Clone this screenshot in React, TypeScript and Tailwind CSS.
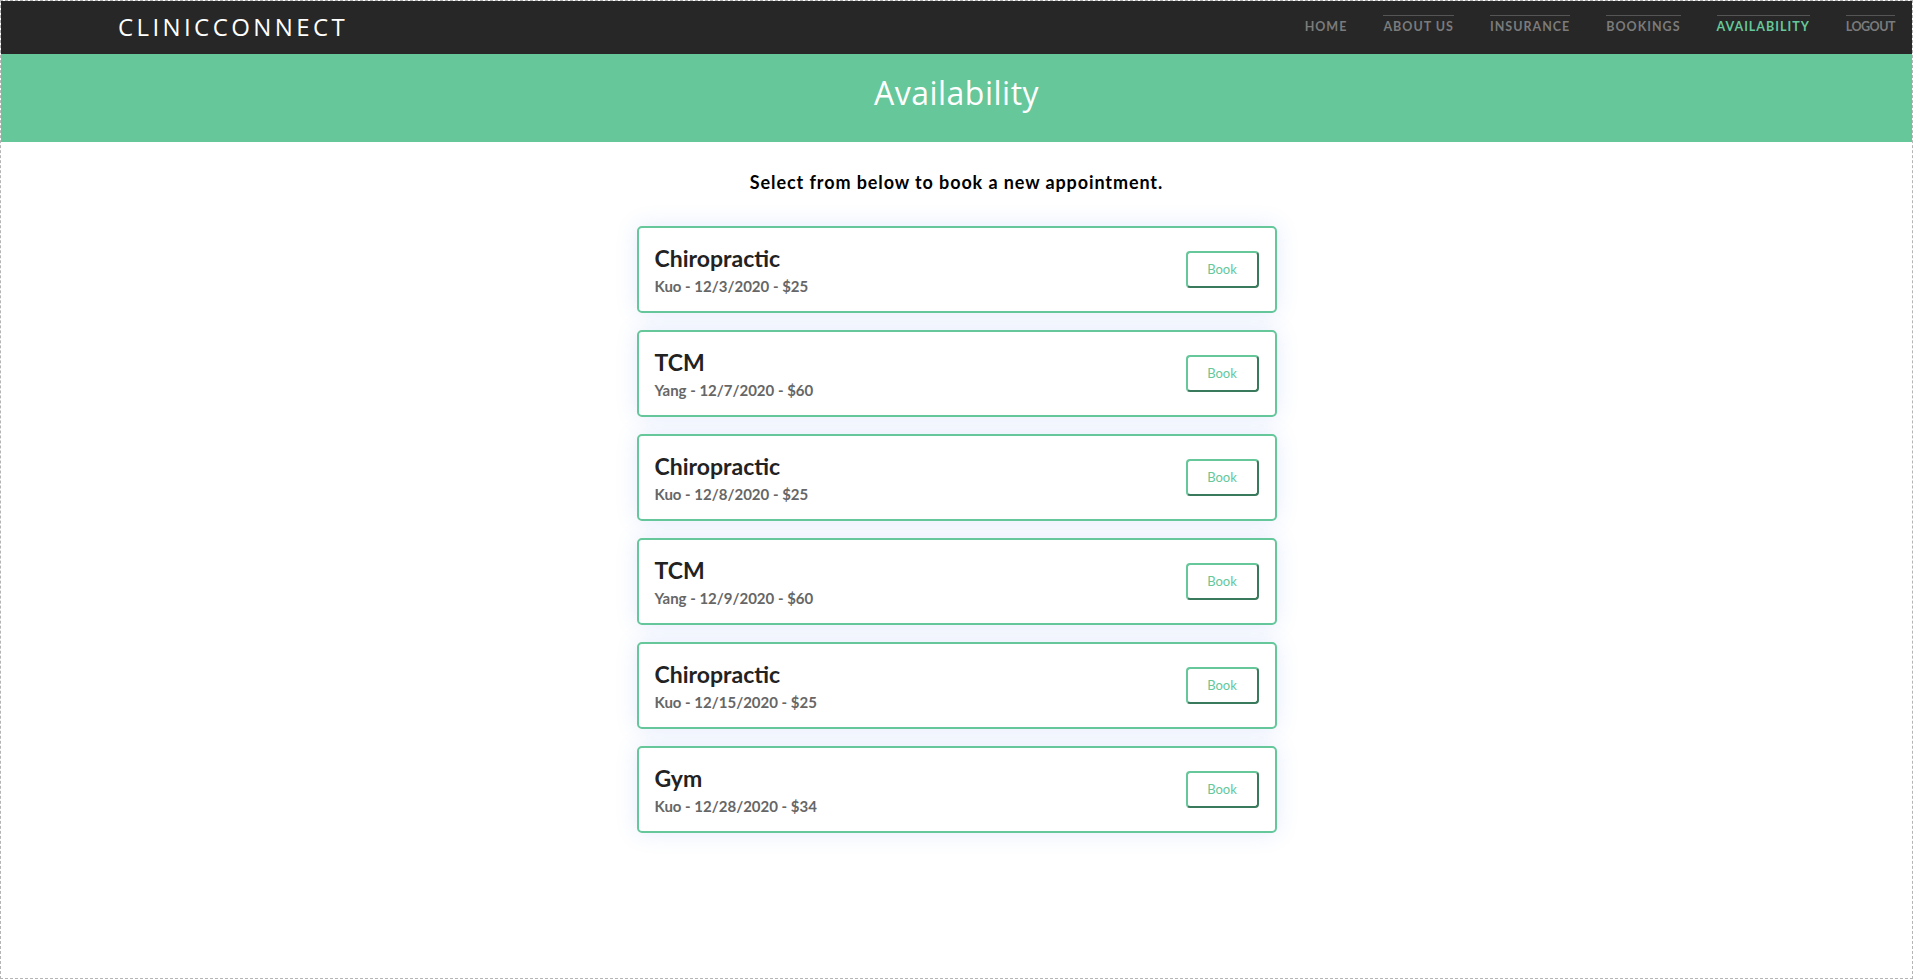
import React from "react";

const navItems = [
  { label: "HOME", line: false, active: false, tight: false },
  { label: "ABOUT US", line: true, active: false, tight: false },
  { label: "INSURANCE", line: true, active: false, tight: false },
  { label: "BOOKINGS", line: true, active: false, tight: false },
  { label: "AVAILABILITY", line: true, active: true, tight: false },
  { label: "LOGOUT", line: true, active: false, tight: true },
];

const slots = [
  { service: "Chiropractic", detail: "Kuo - 12/3/2020 - $25" },
  { service: "TCM", detail: "Yang - 12/7/2020 - $60" },
  { service: "Chiropractic", detail: "Kuo - 12/8/2020 - $25" },
  { service: "TCM", detail: "Yang - 12/9/2020 - $60" },
  { service: "Chiropractic", detail: "Kuo - 12/15/2020 - $25" },
  { service: "Gym", detail: "Kuo - 12/28/2020 - $34" },
];

const App = () => {
  return (
    <div className="w-full h-[979px] border border-dashed border-[#b5b5b5] flex flex-col bg-white font-['Lato','Liberation_Sans',sans-serif]">
      <nav className="h-[53px] bg-[#272727] flex items-center justify-between pl-[117px] pr-[17px]">
        <span className="text-white text-[24px] tracking-[3.4px] font-['Open_Sans',sans-serif] font-normal mt-[-1px]">
          CLINICCONNECT
        </span>
        <div className="flex items-center gap-[36px] mb-[6px]">
          {navItems.map((item) => (
            <a
              key={item.label}
              href="#"
              className={`pt-[3px] text-[12.5px] font-bold leading-[15px] border-t ${
                item.line ? "border-[#555555]" : "border-transparent"
              } ${item.active ? "text-[#65c79a]" : "text-[#7b7b7b]"} ${
                item.tight ? "tracking-[-0.5px]" : "tracking-[1px]"
              }`}
            >
              {item.label}
            </a>
          ))}
        </div>
      </nav>
      <header className="h-[88px] bg-[#65c79a] flex items-center justify-center">
        <h1 className="text-white text-[32px] font-['Open_Sans',sans-serif] font-normal tracking-[0.5px] pb-[10px]">
          Availability
        </h1>
      </header>
      <main className="flex flex-col items-center pt-[27px]">
        <p className="text-[18px] font-bold text-black tracking-[0.9px]">
          Select from below to book a new appointment.
        </p>
        <div className="flex flex-col gap-[17px] mt-[30px]">
          {slots.map((slot, i) => (
            <div
              key={i}
              className="w-[640px] h-[87px] border-2 border-[#65c79a] rounded-[5px] bg-white flex items-center justify-between pl-[16px] pr-[16px] shadow-[0_0_22px_rgba(90,130,235,0.16)]"
            >
              <div className="flex flex-col">
                <span className="text-[23px] font-bold text-[#222222] leading-[28px]">
                  {slot.service}
                </span>
                <span className="text-[15px] font-bold text-[#666666] leading-[20px] mt-[4px]">
                  {slot.detail}
                </span>
              </div>
              <button className="w-[73px] h-[37px] rounded-[4px] border-2 border-[#65c79a] border-r-[#3a7a5c] border-b-[#3a7a5c] text-[13px] text-[#65c79a] bg-white">
                Book
              </button>
            </div>
          ))}
        </div>
      </main>
    </div>
  );
};

export default App;
